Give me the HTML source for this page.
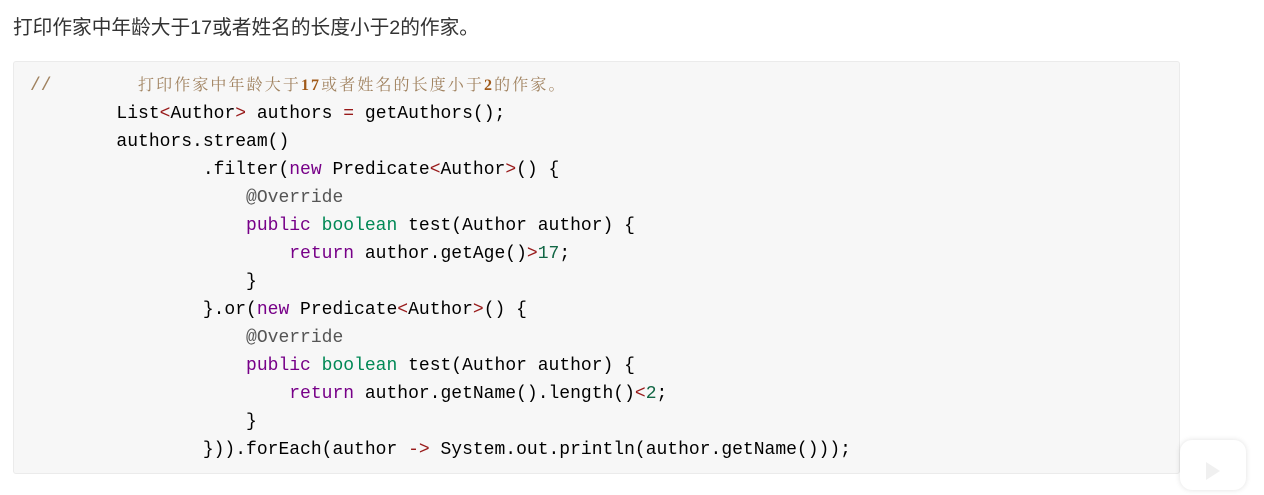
<!DOCTYPE html>
<html><head><meta charset="utf-8"><style>
body{margin:0;background:#fff;width:1264px;height:483px;overflow:hidden;position:relative;font-family:"Liberation Sans","Noto Sans CJK SC",sans-serif;}
.t{position:absolute;left:13px;top:11px;font-size:19.7px;color:#333;}
.code{position:absolute;left:13px;top:61px;width:1165px;height:411px;background:#f7f7f7;border:1px solid #ebebeb;border-radius:3px;}
pre{margin:0;position:absolute;left:16px;top:10px;font-family:"Liberation Mono",monospace;font-size:18px;line-height:28px;color:#000;}
.c{color:#a0825f;font-family:"Liberation Serif","Noto Serif CJK SC",serif;font-size:16px;letter-spacing:2.1px}
.c b{color:#a05a1a}
.k{color:#770088}.g{color:#008855}.o{color:#981a1a}.n{color:#116644}.a{color:#555}
.tv{position:absolute;left:1180px;top:440px;width:66px;height:50px;background:#fff;border-radius:12px;box-shadow:0 0 6px rgba(0,0,0,.12)}
</style></head><body>
<div class="t">打印作家中年龄大于17或者姓名的长度小于2的作家。</div>
<div class="code"><pre><span style="color:#a0825f">//</span>        <span class="c">打印作家中年龄大于<b>17</b>或者姓名的长度小于<b>2</b>的作家。</span>
        List<span class="o">&lt;</span>Author<span class="o">&gt;</span> authors <span class="o">=</span> getAuthors();
        authors.stream()
                .filter(<span class="k">new</span> Predicate<span class="o">&lt;</span>Author<span class="o">&gt;</span>() {
                    <span class="a">@Override</span>
                    <span class="k">public</span> <span class="g">boolean</span> test(Author author) {
                        <span class="k">return</span> author.getAge()<span class="o">&gt;</span><span class="n">17</span>;
                    }
                }.or(<span class="k">new</span> Predicate<span class="o">&lt;</span>Author<span class="o">&gt;</span>() {
                    <span class="a">@Override</span>
                    <span class="k">public</span> <span class="g">boolean</span> test(Author author) {
                        <span class="k">return</span> author.getName().length()<span class="o">&lt;</span><span class="n">2</span>;
                    }
                })).forEach(author <span class="o">-&gt;</span> System.out.println(author.getName()));</pre></div>
<div class="tv"><svg width="66" height="50" viewBox="0 0 66 50"><path d="M26 22 L26 40 L40 31 Z" fill="#f0f0f0"/></svg></div>
</body></html>
